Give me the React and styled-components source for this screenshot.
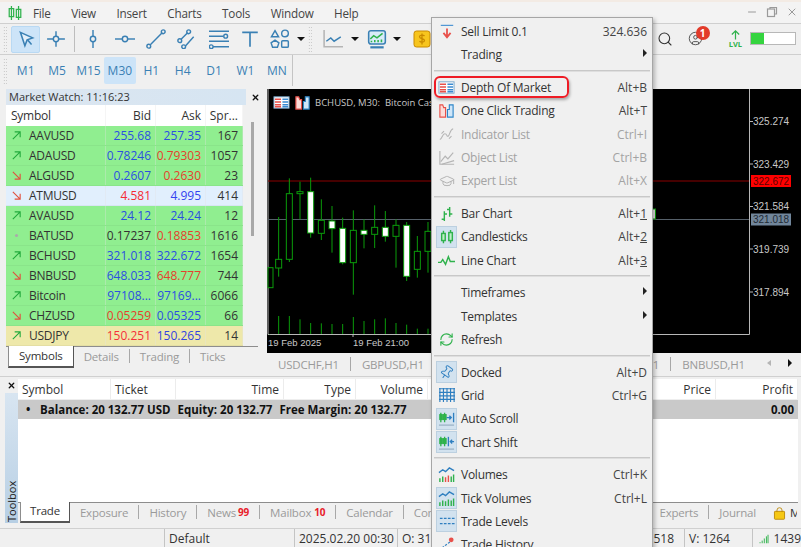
import React from 'react'
import styled, { createGlobalStyle } from 'styled-components'
import { Search, CircleUser, Pin, GraduationCap, RefreshCw, X, Minus } from 'lucide-react'

const FONT = '"Open Sans", "Noto Sans", sans-serif'
const TF_BLUE = '#3a80b4'

const GlobalStyle = createGlobalStyle`
  html, body { margin: 0; padding: 0; background: #f0f0f0; }
  body { font-family: ${FONT}; color: #333; }
`

const Page = styled.div`
  position: relative;
  width: 801px;
  height: 547px;
  overflow: hidden;
  display: flex;
  flex-direction: column;
  background: #f0f0f0;
  font-size: 12.5px;
  border-top: 2px solid #f3ebe4;
  box-sizing: border-box;
`
const MenuBar = styled.div`
  height: 21px;
  flex: none;
  display: flex;
  align-items: center;
  padding-left: 7px;
  background: #f3f3f3;
  border-bottom: 1px solid #cfcfcf;
`
const MenuLabels = styled.div`
  display: flex;
  gap: 20.5px;
  margin-left: 10px;
  flex: 1;
  font-size: 11.7px;
  letter-spacing: -0.2px;
  color: #444;
`
const WindowButtons = styled.div`
  display: flex;
  gap: 8px;
  padding-right: 3px;
  color: #9a9a9a;
  margin-top: -2px;
`
const Toolbar = styled.div`
  height: 31px;
  flex: none;
  display: flex;
  align-items: center;
  padding-left: 3px;
  gap: 1px;
  border-bottom: 1px solid #cfcfcf;
  box-sizing: border-box;
`
const Grip = styled.div`
  width: 4px;
  height: 26px;
  flex: none;
  margin-right: ${(p) => p.$after || 0}px;
  background-image: radial-gradient(#bdbdbd 0.7px, transparent 0.8px);
  background-size: 2.5px 3px;
`
const ToolButton = styled.div`
  width: ${(p) => p.$w || 30.4}px;
  height: 27px;
  flex: none;
  display: flex;
  align-items: center;
  justify-content: center;
  border-radius: 2px;
  background: ${(p) => (p.$active ? '#cde4f8' : 'transparent')};
  border: 1px solid ${(p) => (p.$active ? '#b9d9f3' : 'transparent')};
  box-sizing: border-box;
`
const ToolDivider = styled.div`
  width: 1px;
  height: 26px;
  flex: none;
  background: #bdbdbd;
  margin: 0 2px;
`
const Caret = styled.div`
  width: 0;
  height: 0;
  flex: none;
  border-left: 4px solid transparent;
  border-right: 4px solid transparent;
  border-top: 4px solid #111;
  margin: 0 ${(p) => p.$gap ?? 2}px;
`
const RightTools = styled.div`
  position: absolute;
  top: 21px;
  right: 5px;
  height: 31px;
  display: flex;
  align-items: center;
`
const Badge = styled.span`
  position: absolute;
  top: -5px;
  left: 8px;
  width: 14px;
  height: 14px;
  border-radius: 50%;
  background: #e23b2a;
  color: #fff;
  font-size: 10px;
  font-weight: 700;
  line-height: 14px;
  text-align: center;
`
const UserIcon = styled.div`
  position: relative;
  display: flex;
  margin: 0 26px 0 15px;
`
const LvlIcon = styled.div`
  display: flex;
  flex-direction: column;
  align-items: center;
  color: #2fb24c;
  font-size: 7.5px;
  font-weight: 700;
  line-height: 8px;
  margin-right: 8px;
`
const Progress = styled.div`
  width: 46px;
  height: 13px;
  background: #fff;
  border: 1px solid #b8b8b8;
  box-sizing: border-box;
`
const ProgressFill = styled.div`
  height: 100%;
  background: #35d43f;
`
const TimeframeBar = styled.div`
  height: 31px;
  flex: none;
  display: flex;
  align-items: center;
  padding-left: 3px;
`
const TimeframeGroup = styled.div`
  display: flex;
  height: 100%;
  align-items: center;
  padding-left: 3px;
  border-right: 1px solid #c4c4c4;
  width: 282px;
`
const Timeframe = styled.div`
  width: 31.4px;
  height: 27px;
  flex: none;
  display: flex;
  align-items: center;
  justify-content: center;
  font-size: 12px;
  color: ${TF_BLUE};
  border-radius: 2px;
  background: ${(p) => (p.$active ? '#cde4f8' : 'transparent')};
`
const Main = styled.div`
  height: 290px;
  flex: none;
  display: flex;
  padding: 3px 0 3px 6px;
  box-sizing: border-box;
  gap: 9px;
`
const WatchPanel = styled.div`
  width: 252px;
  flex: none;
  display: flex;
  flex-direction: column;
`
const WatchTitle = styled.div`
  height: 16px;
  flex: none;
  display: flex;
  align-items: center;
`
const WatchCaption = styled.div`
  width: 240px;
  height: 100%;
  padding-left: 3px;
  box-sizing: border-box;
  font-size: 11px;
  line-height: 15px;
  color: #333;
  background: linear-gradient(90deg, #dce6f0, #d6e5f2);
`
const CloseCell = styled.div`
  flex: 1;
  display: flex;
  justify-content: flex-end;
  padding-right: 0;
  margin-right: -2px;
  color: #111;
`
const WatchBody = styled.div`
  display: flex;
  height: 241px;
  flex: none;
`
const WatchTable = styled.div`
  width: 237px;
  flex: none;
  display: flex;
  flex-direction: column;
`
const Row = styled.div`
  display: grid;
  grid-template-columns: 100px 50px 50px 37px;
  height: ${(p) => (p.$head ? 21 : 20)}px;
  flex: none;
  background: ${(p) => p.$bg || '#fff'};
  border-bottom: ${(p) => (p.$head ? 'none' : '1px solid rgba(0,0,0,0.04)')};
  box-sizing: border-box;
`
const Cell = styled.div`
  display: flex;
  align-items: center;
  justify-content: ${(p) => (p.$left ? 'flex-start' : 'flex-end')};
  gap: 7px;
  padding: 0 4px 0 ${(p) => (p.$left ? 5 : 0)}px;
  font-size: 12px;
  letter-spacing: ${(p) => (p.$left ? '-0.25px' : '0')};
  color: ${(p) => p.$color || '#333'};
  border-right: 1px solid rgba(225, 225, 225, 0.35);
  white-space: nowrap;
  overflow: hidden;
`
const ScrollTrack = styled.div`
  flex: 1;
  position: relative;
`
const ScrollThumb = styled.div`
  position: absolute;
  top: 17px;
  left: 8px;
  width: 3px;
  height: 114px;
  background: #a8a8a8;
`
const TabStrip = styled.div`
  display: flex;
  align-items: flex-start;
  flex: none;
  height: ${(p) => p.$h || 21}px;
  border-top: 1px solid #8d8d8d;
  padding-left: ${(p) => p.$pad || 2}px;
  box-sizing: border-box;
`
const Tab = styled.div`
  height: ${(p) => (p.$active ? 'calc(100% + 1px)' : '14px')};
  margin-top: ${(p) => (p.$active ? '-1px' : '2px')};
  display: flex;
  align-items: center;
  padding: 0 ${(p) => p.$x || 10}px ${(p) => (p.$active ? 2 : 0)}px;
  flex: none;
  white-space: nowrap;
  font-size: 11.5px;
  letter-spacing: -0.2px;
  color: ${(p) => (p.$active ? '#333' : '#9a9a9a')};
  background: ${(p) => (p.$active ? '#fff' : 'transparent')};
  border-left: ${(p) => (p.$active ? '1px solid #8d8d8d' : 'none')};
  border-right: 1px solid ${(p) => (p.$active ? '#555' : p.$plain ? 'transparent' : '#a8a8a8')};
  border-bottom: ${(p) => (p.$active ? '2px solid #555' : 'none')};
  box-sizing: border-box;
`
const ClippedTab = styled(Tab)`
  width: 12px;
  padding: 0 0 0 4px;
  overflow: hidden;
  color: #333;
`
const BagSlot = styled.div`
  display: flex;
  flex: none;
  margin: 4px 0 0 6px;
`
const Spacer = styled.div`
  flex: 1;
`
const Mark = styled.sup`
  color: #e8202a;
  font-size: 10px;
  font-weight: 700;
  line-height: 0;
  vertical-align: -3px;
  margin-left: ${(p) => p.$gap || 2}px;
`
const ChartColumn = styled.div`
  flex: 1;
  min-width: 0;
  display: flex;
  flex-direction: column;
`
const ChartBox = styled.div`
  position: relative;
  height: 264px;
  flex: none;
  background: #000;
`
const ChartTitle = styled.div`
  position: absolute;
  top: 5px;
  left: 6px;
  display: flex;
  align-items: center;
  color: #c8c8c8;
  font-size: 9.5px;
  gap: 4px;
  white-space: pre;
`
const ChartTabs = styled.div`
  display: flex;
  align-items: center;
  height: 20px;
  flex: none;
`
const ArrowLeft = styled.div`
  width: 0;
  height: 0;
  flex: none;
  border-top: 3px solid transparent;
  border-bottom: 3px solid transparent;
  border-right: 4px solid #b5b5b5;
  margin: 0 17px 0 10px;
`
const ArrowRight = styled.div`
  width: 0;
  height: 0;
  flex: none;
  border-top: 4px solid transparent;
  border-bottom: 4px solid transparent;
  border-left: 4px solid #111;
  margin-right: 9px;
`
const Toolbox = styled.div`
  height: 152px;
  flex: none;
  display: flex;
  padding-left: 5px;
  border-top: 1px solid #d0d0d0;
  box-sizing: border-box;
`
const ToolboxRail = styled.div`
  width: 13px;
  flex: none;
  display: flex;
  flex-direction: column;
`
const RailClose = styled.div`
  height: 16px;
  flex: none;
  display: flex;
  align-items: center;
  justify-content: center;
  color: #111;
`
const RailLabel = styled.div`
  flex: 1;
  display: flex;
  align-items: center;
  justify-content: flex-start;
  writing-mode: vertical-rl;
  transform: rotate(180deg);
  font-size: 11px;
  line-height: 12px;
  padding-top: 1px;
  margin-bottom: 5px;
  background: linear-gradient(0deg, #d8e5f1, #b7cfe4);
  color: #222;
`
const ToolboxBody = styled.div`
  flex: 1;
  min-width: 0;
  display: flex;
  flex-direction: column;
  padding: 2px 3px 0 0;
`
const TradeTable = styled.div`
  height: 123px;
  flex: none;
  background: #fff;
  display: flex;
  flex-direction: column;
`
const TradeHead = styled.div`
  display: flex;
  height: 21px;
  flex: none;
  border-bottom: 1px solid #eee;
  box-sizing: border-box;
`
const HeadCell = styled.div`
  width: ${(p) => p.$w}px;
  flex: ${(p) => (p.$grow ? 1 : 'none')};
  display: flex;
  align-items: center;
  justify-content: ${(p) => (p.$left ? 'flex-start' : 'flex-end')};
  padding: 0 4px;
  font-size: 12px;
  box-sizing: border-box;
  border-right: 1px solid #ececec;
`
const BalanceRow = styled.div`
  display: flex;
  align-items: center;
  height: 19px;
  flex: none;
  padding: 0 4px 0 8px;
  gap: 7px;
  background: #c9c9c9;
  color: #111;
  font-weight: 700;
  font-size: 11.5px;
  white-space: pre;
`
const Bullet = styled.span`
  width: 7px;
`
const StatusBar = styled.div`
  height: 20px;
  flex: none;
  display: flex;
  font-size: 12px;
  border-top: 1px solid #d0d0d0;
  background: #f0f0f0;
  white-space: nowrap;
  overflow: hidden;
  box-sizing: border-box;
`
const StatusCell = styled.div`
  width: ${(p) => p.$w}px;
  flex: none;
  display: flex;
  align-items: center;
  justify-content: ${(p) => (p.$end ? 'flex-end' : 'flex-start')};
  gap: 5px;
  padding: 0 ${(p) => (p.$end ? 10 : 0)}px 0 ${(p) => p.$pad ?? 4}px;
  box-sizing: border-box;
  border-right: ${(p) => (p.$plain ? 'none' : '1px solid #c4c4c4')};
  overflow: hidden;
`
const ContextMenu = styled.div`
  position: absolute;
  top: 15px;
  left: 431px;
  width: 222px;
  height: 560px;
  padding-top: 2px;
  background: #f0f0f0;
  border: 1px solid #a6a6a6;
  box-shadow: 2px 2px 4px rgba(0, 0, 0, 0.25);
  box-sizing: border-box;
  font-size: 12px;
`
const MenuRow = styled.div`
  position: relative;
  height: 23.33px;
  display: flex;
  align-items: center;
  padding-right: 5px;
  color: ${(p) => (p.$off ? '#a3a3a3' : '#333')};
  &::after {
    content: '';
    display: ${(p) => (p.$marked ? 'block' : 'none')};
    position: absolute;
    left: 2px;
    top: 0;
    width: 135px;
    height: 22px;
    border: 2px solid #ee1c25;
    border-radius: 6px;
    box-shadow: 1px 2px 3px rgba(0, 0, 0, 0.3);
    box-sizing: border-box;
  }
`
const IconSlot = styled.div`
  width: 21px;
  height: 22px;
  margin: 0 4px 0 4px;
  flex: none;
  display: flex;
  align-items: center;
  justify-content: center;
  box-sizing: border-box;
  background: ${(p) => (p.$checked ? '#d2e2ef' : 'transparent')};
  border: 1px solid ${(p) => (p.$checked ? '#bcd0e0' : 'transparent')};
`
const MenuText = styled.div`
  flex: 1;
  white-space: nowrap;
  letter-spacing: -0.25px;
`
const Shortcut = styled.div`
  color: ${(p) => (p.$off ? '#a3a3a3' : '#444')};
  white-space: nowrap;
  & u {
    text-underline-offset: 1px;
  }
`
const SubArrow = styled.div`
  width: 0;
  height: 0;
  border-top: 4px solid transparent;
  border-bottom: 4px solid transparent;
  border-left: 4px solid #222;
  margin-top: -3px;
`
const MenuSep = styled.div`
  height: 1px;
  margin: 3.5px 2px 3.8px 2px;
  background: #c8c8c8;
  border-bottom: 1px solid #dedede;
`

const Svg = ({ size = 18, children, ...rest }) => (
  <svg width={size} height={size} viewBox="0 0 18 18" fill="none" stroke={TF_BLUE} strokeWidth="1.3" {...rest}>
    {children}
  </svg>
)
const Logo = () => (
  <Svg size={16} stroke="#2fb24c" strokeWidth="1.4">
    <path d="M5 1v16M2.500 4h5v9h-5zM13 1v16M10.500 5h5v9h-5z" />
  </Svg>
)
const Candles = ({ color = '#2fb24c' }) => (
  <Svg size={16} stroke={color} strokeWidth="1.6">
    <path d="M5 2v14M13 1v15" />
    <rect x="3" y="5" width="4" height="8" fill="#bff0c8" />
    <rect x="11" y="4" width="4" height="9" fill="#bff0c8" />
  </Svg>
)
const DomIcon = () => (
  <Svg size={17} strokeWidth="1">
    <rect x="1" y="3" width="16" height="12" fill="#fff" stroke="#7aa8cc" />
    <path d="M2 5.500h6.500M2 8.500h6.500M2 11.500h6.500M2 13.500h6.500" stroke="#e8504a" strokeWidth="1.6" />
    <path d="M10 5.500h6M10 8.500h6M10 11.500h6M10 13.500h6" stroke="#3a8ad0" strokeWidth="1.6" />
  </Svg>
)
const OneClickIcon = () => (
  <Svg size={17} strokeWidth="1.2">
    <path d="M2 3h3l1 3h2v10H2z" fill="#fbdcd8" stroke="#e8504a" />
    <path d="M10 8h2V3h4v13h-6z" fill="#cfe6f8" stroke="#2e86c8" />
  </Svg>
)

const CursorIcon = () => (
  <Svg size={20} strokeWidth="1.4"><path d="M4 3l11 5-5 1.800L8 15z" fill="#e3eff9" /><path d="M10.500 10l3.500 4" /></Svg>
)
const CrossIcon = () => (
  <Svg size={20}><path d="M1 9h16M9 2v14" /><circle cx="9" cy="9" r="2.400" fill="#f0f0f0" /></Svg>
)
const toolIcons = [
  <Svg key="v" size={20}><path d="M9 1v16" /><circle cx="9" cy="9" r="2.400" fill="#f0f0f0" /></Svg>,
  <Svg key="h" size={20}><path d="M0 9h18" /><circle cx="9" cy="9" r="2.400" fill="#f0f0f0" /></Svg>,
  <Svg key="t" size={20}><path d="M3 15L15 3" /><circle cx="2.500" cy="15.500" r="1.700" fill="#f0f0f0" /><circle cx="15.500" cy="2.500" r="1.700" fill="#f0f0f0" /></Svg>,
  <Svg key="p" size={20}><path d="M3 10l7-7M7 16l8-9" /><circle cx="2.500" cy="10.500" r="1.700" fill="#f0f0f0" /><circle cx="10.500" cy="2.500" r="1.700" fill="#f0f0f0" /><circle cx="6" cy="16" r="1.700" fill="#f0f0f0" /></Svg>,
  <Svg key="f" size={20}><path d="M0 2h18M0 6.500h13M0 11h18M3 16h15" /><circle cx="15" cy="6.500" r="1.700" fill="#f0f0f0" /><circle cx="2" cy="16" r="1.700" fill="#f0f0f0" /></Svg>,
  <Svg key="T" size={20} strokeWidth="1.5"><path d="M2 3h14M9 3v13" /></Svg>,
]
const ShapesIcon = () => (
  <Svg size={20}>
    <path d="M4.500 1.500l3.200 5.500H1.300z" />
    <circle cx="13.500" cy="4" r="3" />
    <path d="M4.500 10l3.500 2.500-1.300 4H2.300L1 12.500z" />
    <rect x="10.500" y="10.500" width="6" height="6" rx="1" />
  </Svg>
)
const LineChartIcon = () => (
  <Svg size={20} stroke="#3a80b4">
    <path d="M1 1v15h17" stroke="#b5b5b5" strokeWidth="1.4" />
    <path d="M3 11l4-3 3 3 6-4" />
  </Svg>
)
const IndicatorIcon = () => (
  <Svg size={20} strokeWidth="1.4">
    <rect x="1.500" y="1.500" width="15" height="12" rx="2" fill="#d8ecf9" />
    <path d="M3 9l3-3 3 2 5-4" stroke="#2fb24c" />
    <path d="M4 12V10.500M7 12v-2M10 12V10M13 12V9.500" stroke="#2fb24c" />
    <path d="M3 16.500h12" strokeWidth="2" />
  </Svg>
)
const CoinIcon = () => (
  <Svg size={18} stroke="#c98a00" strokeWidth="1">
    <rect x="1" y="1" width="16" height="16" rx="2.500" fill="#f7c51e" />
    <path d="M11.500 6c-1-1.200-5-1.200-5 .8 0 2.500 5 1.400 5 3.800 0 2-4 2-5 .6M9 3.500v11" strokeWidth="1.300" />
  </Svg>
)
const LvlArrow = () => (
  <Svg size={11} stroke="#2fb24c" strokeWidth="2"><path d="M9 17V3M3 9l6-6 6 6" /></Svg>
)
const Arrow = ({ dir }) => {
  if (dir === 'dot') return <Svg size={11}><circle cx="9" cy="9" r="2.500" fill="#aaa" stroke="none" /></Svg>
  if (dir === 'up') return <Svg size={11} stroke="#22aa3c" strokeWidth="1.800"><path d="M3 15L15 3M6 3h9v9" /></Svg>
  return <Svg size={11} stroke="#e0503e" strokeWidth="1.800"><path d="M3 3l12 12M15 6v9H6" /></Svg>
}
const SignalBars = () => (
  <Svg size={14} stroke="#2fb24c" strokeWidth="1.800"><path d="M2 17v-2M6 17v-5M10 17V8M14 17V4M17 17V1" /></Svg>
)
const BagIcon = () => (
  <Svg size={13} stroke="#b98500" strokeWidth="1.200">
    <rect x="2" y="6" width="14" height="11" rx="1" fill="#f6c814" />
    <path d="M5.500 7V4.500a3.500 3.500 0 0 1 7 0V7" />
  </Svg>
)

const green = '#2fb24c'
const blue = '#2f7fc0'
const grey = '#b4b4b4'
const menuIcons = {
  sell: <Svg size={16} stroke="#e8504a" strokeWidth="2"><path d="M2 1.500h14" stroke="#3a8ad0" strokeWidth="1.200" /><path d="M9 5v9M5 10l4 5 4-5" /></Svg>,
  dom: <DomIcon />,
  oneclick: <OneClickIcon />,
  indicator: <Svg size={15} stroke={grey}><path d="M1 15c3-1 3-7 6-7s2 4 4 3 2-8 6-9" /><path d="M3 8l3-3M12 14l3-3" /></Svg>,
  object: <Svg size={16} stroke={grey}><path d="M1 1v15h16" /><path d="M2 13l5-6 3 3 6-7" /><path d="M3 16l14-4" /></Svg>,
  expert: <GraduationCap size={16} color={grey} strokeWidth={1.5} />,
  bar: <Svg size={16} stroke={green} strokeWidth="1.600"><path d="M6 6v11M3 15h3M6 9h3M12 1v11M9 4h3M12 9h3" /></Svg>,
  candle: <Candles />,
  line: <Svg size={17} stroke={green} strokeWidth="1.500"><path d="M0 11h3l2-3 3 5 3-8 2 5h5" /></Svg>,
  refresh: <RefreshCw size={15} color={green} strokeWidth={1.8} />,
  pin: <Pin size={15} color={blue} strokeWidth={1.5} style={{ transform: 'rotate(35deg)' }} />,
  grid: <Svg size={16} stroke={blue} strokeWidth="1.300"><path d="M1 1v16M5 1v16M9 1v16M13 1v16M17 1v16M0 2h18M0 6h18M0 10h18M0 14h18" /></Svg>,
  auto: <Svg size={17} stroke={green} strokeWidth="1.400"><path d="M3 3v10M7 3v10" /><rect x="2" y="5" width="2.500" height="5" fill={green} /><rect x="6" y="5" width="2.500" height="5" fill={green} /><path d="M9 8h5M12 6l2 2-2 2" stroke="#2f7fc0" /><path d="M16.500 3v10" stroke="#2f7fc0" /><path d="M1 16h16" stroke="#9cb4c6" /></Svg>,
  shift: <Svg size={17} stroke={green} strokeWidth="1.400"><path d="M3 3v10M7 3v10" /><rect x="2" y="5" width="2.500" height="5" fill={green} /><rect x="6" y="5" width="2.500" height="5" fill={green} /><path d="M11 3v10" stroke="#2f7fc0" /><path d="M17 8h-4M15 6l-2 2 2 2" stroke="#2f7fc0" /><path d="M1 16h16" stroke="#9cb4c6" /></Svg>,
  volumes: <Svg size={17} strokeWidth="1.500"><path d="M1 7l4-3 3 2 4-4 5 3" stroke={blue} /><path d="M2 17v-4M5 17v-6" stroke={green} /><path d="M8 17v-5M11 17v-7" stroke="#e8504a" /><path d="M14 17v-6M16.500 17v-8" stroke={green} /></Svg>,
  tick: <Svg size={17} strokeWidth="1.500"><path d="M1 7l4-3 3 2 4-4 5 3" stroke={blue} /><path d="M2 17v-4M5 17v-6M8 17v-5M11 17v-7M14 17v-6M16.500 17v-8" stroke={green} /></Svg>,
  levels: <Svg size={16} stroke={blue} strokeWidth="1.300" strokeDasharray="3 1.500"><path d="M1 6h17M1 12h17" /></Svg>,
  history: <Svg size={17} stroke={blue} strokeWidth="1.300" strokeDasharray="2.500 1.500"><path d="M1 15L13 6" /><circle cx="14" cy="4" r="2.500" fill="#e8504a" stroke="none" /></Svg>,
}

const menuSections = [
  [
    { label: 'Sell Limit 0.1', icon: 'sell', key: '324.636' },
    { label: 'Trading', arrow: true },
  ],
  [
    { label: 'Depth Of Market', icon: 'dom', key: 'Alt+B', marked: true },
    { label: 'One Click Trading', icon: 'oneclick', key: 'Alt+T' },
    { label: 'Indicator List', icon: 'indicator', key: 'Ctrl+I', off: true },
    { label: 'Object List', icon: 'object', key: 'Ctrl+B', off: true },
    { label: 'Expert List', icon: 'expert', key: 'Alt+X', off: true },
  ],
  [
    { label: 'Bar Chart', icon: 'bar', key: 'Alt+', u: '1' },
    { label: 'Candlesticks', icon: 'candle', key: 'Alt+', u: '2', checked: true },
    { label: 'Line Chart', icon: 'line', key: 'Alt+', u: '3' },
  ],
  [
    { label: 'Timeframes', arrow: true },
    { label: 'Templates', arrow: true },
    { label: 'Refresh', icon: 'refresh' },
  ],
  [
    { label: 'Docked', icon: 'pin', key: 'Alt+D', checked: true },
    { label: 'Grid', icon: 'grid', key: 'Ctrl+G' },
    { label: 'Auto Scroll', icon: 'auto', checked: true },
    { label: 'Chart Shift', icon: 'shift', checked: true },
  ],
  [
    { label: 'Volumes', icon: 'volumes', key: 'Ctrl+K' },
    { label: 'Tick Volumes', icon: 'tick', key: 'Ctrl+L', checked: true },
    { label: 'Trade Levels', icon: 'levels', checked: true },
    { label: 'Trade History', icon: 'history' },
  ],
]

const BLUE = '#2b4fe0'
const RED = '#e5402c'
const DARK = '#333'
const LIME = '#90ee90'
const quotes = [
  ['up', 'AAVUSD', '255.68', BLUE, '257.35', BLUE, '167', LIME],
  ['up', 'ADAUSD', '0.78246', BLUE, '0.79303', RED, '1057', LIME],
  ['down', 'ALGUSD', '0.2607', BLUE, '0.2630', RED, '23', LIME],
  ['down', 'ATMUSD', '4.581', '#f52a35', '4.995', '#3344f0', '414', '#e1effd'],
  ['up', 'AVAUSD', '24.12', BLUE, '24.24', BLUE, '12', LIME],
  ['dot', 'BATUSD', '0.17237', DARK, '0.18853', RED, '1616', LIME],
  ['up', 'BCHUSD', '321.018', BLUE, '322.672', BLUE, '1654', LIME],
  ['down', 'BNBUSD', '648.033', BLUE, '648.777', RED, '744', LIME],
  ['up', 'Bitcoin', '97108...', BLUE, '97169...', BLUE, '6066', LIME],
  ['down', 'CHZUSD', '0.05259', RED, '0.05325', BLUE, '66', LIME],
  ['up', 'USDJPY', '150.251', '#f5303a', '150.265', '#3344e0', '14', '#eee8aa'],
]

// x centre, body top/bottom, wick top/bottom, white body, volume top (zoomed reference px)
const candles = [
  [14, 545, 605, 545, 605, false, 745],
  [41, 520, 546, 393, 572, false, 690],
  [73, 323, 520, 277, 528, false, 690],
  [105, 317, 323, 287, 400, false, 700],
  [137, 317, 441, 275, 455, true, 711],
  [169, 403, 442, 340, 462, false, 712],
  [201, 405, 428, 360, 500, true, 714],
  [233, 427, 530, 395, 535, true, 714],
  [265, 433, 530, 373, 626, false, 693],
  [297, 433, 445, 400, 487, true, 705],
  [329, 424, 445, 358, 486, false, 700],
  [361, 424, 451, 375, 467, true, 697],
  [393, 418, 451, 400, 545, false, 711],
  [425, 418, 571, 408, 585, true, 716],
  [457, 496, 550, 450, 575, false, 728],
  [489, 436, 496, 408, 560, false, 728],
]
const px = (v) => v / 3 - 2
const py = (v) => v / 3 - 3
const axisLabels = [
  ['325.274', 32.5],
  ['323.429', 75],
  ['321.584', 117.5],
  ['319.739', 160],
  ['317.894', 203],
]
const AXIS_FONT = 'Liberation Sans, sans-serif'

const Chart = () => (
  <svg width="534" height="264" viewBox="0 0 534 264">
    <path d="M1 0V245.500H482.500V0" stroke="#b8b8b8" fill="none" />
    {axisLabels.map(([t, y]) => (
      <g key={t}>
        <path d={`M482 ${y}h4`} stroke="#b8b8b8" />
        <text x="486" y={y + 3.5} fill="#c8c8c8" fontSize="10" fontFamily={AXIS_FONT}>{t}</text>
      </g>
    ))}
    <path d="M1 92H482" stroke="#8c0000" />
    <path d="M1 130.500H482" stroke="#56606a" />
    {candles.map(([x, top, bottom, wickTop, wickBottom, white, vol]) => (
      <g key={x}>
        <path d={`M${px(x)} ${py(wickTop)}V${py(wickBottom)}`} stroke="#0a9c0a" />
        <rect
          x={Math.max(px(x) - 3, 1)}
          y={py(top)}
          width={px(x) < 3 ? 5 : 6}
          height={py(bottom) - py(top)}
          fill={white ? '#fff' : '#000'}
          stroke="#0a9c0a"
        />
        <path d={`M${px(x)} ${py(vol)}V245`} stroke="#0a9c0a" />
      </g>
    ))}
    <rect x="382.500" y="120" width="6" height="10" fill="#ddd" stroke="#0a9c0a" />
    <path d="M86 245v3" stroke="#b8b8b8" />
    <text x="1" y="256.500" fill="#c8c8c8" fontSize="9.500" fontFamily={AXIS_FONT}>19 Feb 2025</text>
    <text x="86" y="256.500" fill="#c8c8c8" fontSize="9.500" fontFamily={AXIS_FONT}>19 Feb 21:00</text>
    <rect x="484" y="86" width="40" height="12" fill="#f00" />
    <text x="486" y="95.500" fill="#5a0000" fontSize="10" fontFamily={AXIS_FONT}>322.672</text>
    <rect x="484" y="124.500" width="40" height="12" fill="#71869b" />
    <text x="486" y="134" fill="#1f2a35" fontSize="10" fontFamily={AXIS_FONT}>321.018</text>
  </svg>
)

const closeIcon = <X size={9} strokeWidth={3.5} />

export default function App() {
  return (
    <>
      <GlobalStyle />
      <Page>
        <MenuBar>
          <Logo />
          <MenuLabels>
            {['File', 'View', 'Insert', 'Charts', 'Tools', 'Window', 'Help'].map((m) => (
              <span key={m}>{m}</span>
            ))}
          </MenuLabels>
          <WindowButtons>
            <Minus size={12} />
            <svg width="12" height="12" viewBox="0 0 12 12" fill="none" stroke="currentColor" strokeWidth="1.200">
              <rect x="1.500" y="3" width="7" height="7.500" />
              <path d="M4 3V1.500h6.500V8H8.500" />
            </svg>
            <X size={12} />
          </WindowButtons>
        </MenuBar>
        <Toolbar>
          <Grip $after={3} />
          <ToolButton $active $w={29}><CursorIcon /></ToolButton>
          <ToolButton $w={30}><CrossIcon /></ToolButton>
          <ToolDivider />
          {toolIcons.map((icon, i) => (
            <ToolButton key={i}>{icon}</ToolButton>
          ))}
          <ToolButton $w={28}><ShapesIcon /></ToolButton>
          <Caret />
          <Grip $after={5} />
          <ToolButton $w={30}><LineChartIcon /></ToolButton>
          <Caret />
          <ToolButton $w={30}><IndicatorIcon /></ToolButton>
          <Caret $gap={0} />
          <ToolButton $w={40}><CoinIcon /></ToolButton>
        </Toolbar>
        <RightTools>
          <Search size={16} color="#333" strokeWidth={1.6} />
          <UserIcon>
            <CircleUser size={15} color="#444" strokeWidth={1.4} />
            <Badge>1</Badge>
          </UserIcon>
          <LvlIcon><LvlArrow />LVL</LvlIcon>
          <Progress><ProgressFill style={{ width: '30%' }} /></Progress>
        </RightTools>
        <TimeframeBar>
          <Grip />
          <TimeframeGroup>
            {['M1', 'M5', 'M15', 'M30', 'H1', 'H4', 'D1', 'W1', 'MN'].map((t) => (
              <Timeframe key={t} $active={t === 'M30'}>{t}</Timeframe>
            ))}
          </TimeframeGroup>
        </TimeframeBar>
        <Main>
          <WatchPanel>
            <WatchTitle>
              <WatchCaption>Market Watch: 11:16:23</WatchCaption>
              <CloseCell>{closeIcon}</CloseCell>
            </WatchTitle>
            <WatchBody>
              <WatchTable>
                <Row $head>
                  <Cell $left>Symbol</Cell>
                  <Cell>Bid</Cell>
                  <Cell>Ask</Cell>
                  <Cell>Spr...</Cell>
                </Row>
                {quotes.map(([dir, symbol, bid, bidColor, ask, askColor, spread, bg]) => (
                  <Row key={symbol} $bg={bg}>
                    <Cell $left><Arrow dir={dir} />{symbol}</Cell>
                    <Cell $color={bidColor}>{bid}</Cell>
                    <Cell $color={askColor}>{ask}</Cell>
                    <Cell>{spread}</Cell>
                  </Row>
                ))}
              </WatchTable>
              <ScrollTrack><ScrollThumb /></ScrollTrack>
            </WatchBody>
            <TabStrip $h={22}>
              <Tab $active $x={10}>Symbols</Tab>
              <Tab>Details</Tab>
              <Tab>Trading</Tab>
              <Tab $plain>Ticks</Tab>
            </TabStrip>
          </WatchPanel>
          <ChartColumn>
            <ChartBox>
              <Chart />
              <ChartTitle>
                <DomIcon />
                <OneClickIcon />
                <span>BCHUSD, M30:  Bitcoin Cash</span>
              </ChartTitle>
            </ChartBox>
            <ChartTabs>
              <Tab $x={11}>USDCHF,H1</Tab>
              <Tab $x={11}>GBPUSD,H1</Tab>
              <Spacer />
              <Tab $x={11}>XAUUSD,H1</Tab>
              <Tab $x={11} $plain>BNBUSD,H1</Tab>
              <ArrowLeft />
              <ArrowRight />
            </ChartTabs>
          </ChartColumn>
        </Main>
        <Toolbox>
          <ToolboxRail>
            <RailClose>{closeIcon}</RailClose>
            <RailLabel>Toolbox</RailLabel>
          </ToolboxRail>
          <ToolboxBody>
            <TradeTable>
              <TradeHead>
                <HeadCell $w={93} $left>Symbol</HeadCell>
                <HeadCell $w={65} $left>Ticket</HeadCell>
                <HeadCell $w={108}>Time</HeadCell>
                <HeadCell $w={72}>Type</HeadCell>
                <HeadCell $w={72}>Volume</HeadCell>
                <HeadCell $grow>Price</HeadCell>
                <HeadCell $w={82}>Profit</HeadCell>
              </TradeHead>
              <BalanceRow>
                <Bullet>•</Bullet>
                <span>Balance: 20 132.77 USD</span>
                <span>Equity: 20 132.77</span>
                <span>Free Margin: 20 132.77</span>
                <Spacer />
                <span>0.00</span>
              </BalanceRow>
            </TradeTable>
            <TabStrip $h={21} $pad={2}>
              <Tab $active $x={9}>Trade</Tab>
              <Tab>Exposure</Tab>
              <Tab>History</Tab>
              <Tab>News<Mark>99</Mark></Tab>
              <Tab>Mailbox<Mark $gap={3}>10</Mark></Tab>
              <Tab>Calendar</Tab>
              <Tab>Company</Tab>
              <Spacer />
              <Tab>Experts</Tab>
              <Tab $plain>Journal</Tab>
              <BagSlot><BagIcon /></BagSlot>
              <ClippedTab $plain>Market</ClippedTab>
            </TabStrip>
          </ToolboxBody>
        </Toolbox>
        <StatusBar>
          <StatusCell $w={165} />
          <StatusCell $w={130}>Default</StatusCell>
          <StatusCell $w={103}>2025.02.20 00:30</StatusCell>
          <StatusCell $w={150}>O: 318.518</StatusCell>
          <StatusCell $w={137} $end>C: 321.518</StatusCell>
          <StatusCell $w={68}>V: 1264</StatusCell>
          <StatusCell $w={48} $plain $pad={6}><SignalBars />1439</StatusCell>
        </StatusBar>
        <ContextMenu>
          {menuSections.map((section, s) => (
            <React.Fragment key={s}>
              {s > 0 && <MenuSep />}
              {section.map((item) => (
                <MenuRow key={item.label} $off={item.off} $marked={item.marked}>
                  <IconSlot $checked={item.checked}>{item.icon && menuIcons[item.icon]}</IconSlot>
                  <MenuText>{item.label}</MenuText>
                  {item.arrow && <SubArrow />}
                  {item.key && (
                    <Shortcut $off={item.off}>
                      {item.key}
                      {item.u && <u>{item.u}</u>}
                    </Shortcut>
                  )}
                </MenuRow>
              ))}
            </React.Fragment>
          ))}
        </ContextMenu>
      </Page>
    </>
  )
}
